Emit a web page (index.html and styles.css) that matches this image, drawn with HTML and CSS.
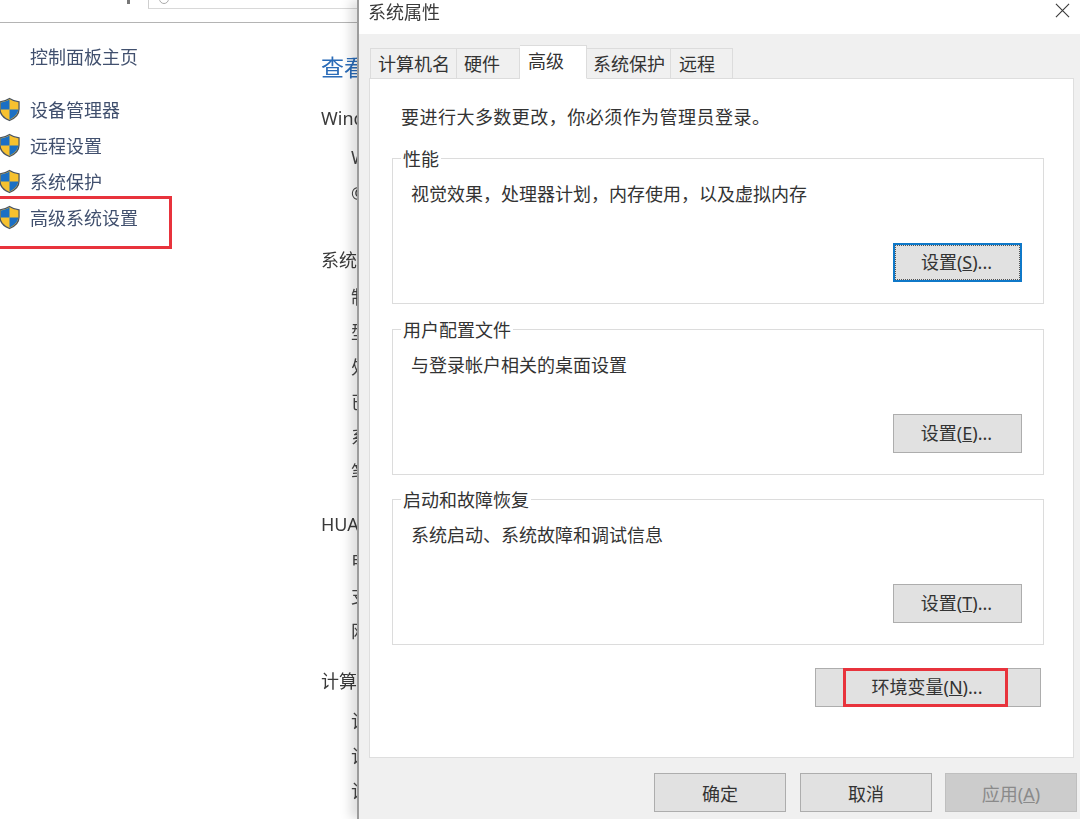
FILE: index.html
```html
<!DOCTYPE html>
<html lang="zh-CN">
<head>
<meta charset="utf-8">
<title>系统属性</title>
<link rel="stylesheet" href="styles.css">
</head>
<body>
<svg class="defs" width="0" height="0" aria-hidden="true">
  <symbol id="shield" viewBox="0 0 22 25">
    <path d="M11 1 C8 3 5 4 1 4.500 V12 C1 18 6 22 11 24 C16 22 21 18 21 12 V4.500 C17 4 14 3 11 1Z" fill="#f7c12f" stroke="#4b5460" stroke-width="1.300"/>
    <path d="M11 2 C8.500 3.500 5.500 4.600 1.800 5.200 V12.500 H11Z" fill="#1b6fc4"/>
    <path d="M11 12.500 H20.200 C19.700 17.500 15.500 21 11 23Z" fill="#1b6fc4"/>
  </symbol>
</svg>
<div class="page">
  <div class="behind">
    <div class="topbar">
      <span class="crumb"></span>
      <div class="search"><span class="lens"></span></div>
    </div>
    <div class="columns">
      <nav class="side">
        <a class="home">控制面板主页</a>
        <a class="link"><svg class="shield"><use href="#shield"/></svg>设备管理器</a>
        <a class="link"><svg class="shield"><use href="#shield"/></svg>远程设置</a>
        <a class="link"><svg class="shield"><use href="#shield"/></svg>系统保护</a>
        <a class="link link-marked"><svg class="shield"><use href="#shield"/></svg>高级系统设置<span class="mark mark-side"></span></a>
      </nav>
      <main class="info">
        <h1 class="info-title">查看</h1>
        <section class="sec sec-edition">
          <h2 class="sec-head">Wind</h2>
          <p class="edition">W</p>
          <p class="row-plain">©</p>
        </section>
        <section class="sec sec-system">
          <h2 class="sec-head">系统</h2>
          <ul class="rows">
            <li>制</li><li>型</li><li>处</li><li>已</li><li>系</li><li>笔</li>
          </ul>
        </section>
        <section class="sec sec-vendor">
          <h2 class="sec-head">HUA</h2>
          <ul class="rows">
            <li>电</li><li>支</li><li>网</li>
          </ul>
        </section>
        <section class="sec sec-vendor2">
          <h2 class="sec-head">计算</h2>
          <ul class="rows rows-last">
            <li>计</li><li>计</li><li>计</li>
          </ul>
        </section>
      </main>
    </div>
  </div>

  <div class="dialog">
    <header class="titlebar">
      <span>系统属性</span>
      <svg class="close" viewBox="0 0 16 16" aria-label="关闭"><path d="M1 1 L15 15 M15 1 L1 15" stroke="#3a3a3a" stroke-width="1.200" fill="none"/></svg>
    </header>
    <div class="dialog-body">
      <div class="tabs">
        <span class="tab tab-1">计算机名</span>
        <span class="tab tab-2">硬件</span>
        <span class="tab tab-active">高级</span>
        <span class="tab tab-4">系统保护</span>
        <span class="tab tab-5">远程</span>
      </div>
      <div class="panel">
        <p class="notice">要进行大多数更改，你必须作为管理员登录。</p>
        <div class="group">
          <div class="legend">性能</div>
          <p class="desc">视觉效果，处理器计划，内存使用，以及虚拟内存</p>
          <div class="group-foot"><button class="btn btn-focus">设置(<u>S</u>)...</button></div>
        </div>
        <div class="group">
          <div class="legend">用户配置文件</div>
          <p class="desc">与登录帐户相关的桌面设置</p>
          <div class="group-foot"><button class="btn">设置(<u>E</u>)...</button></div>
        </div>
        <div class="group group-last">
          <div class="legend">启动和故障恢复</div>
          <p class="desc">系统启动、系统故障和调试信息</p>
          <div class="group-foot"><button class="btn">设置(<u>T</u>)...</button></div>
        </div>
        <div class="env-row">
          <button class="btn btn-env">环境变量(<u>N</u>)...<span class="mark mark-env"></span></button>
        </div>
      </div>
      <div class="actions">
        <button class="btn btn-action">确定</button>
        <button class="btn btn-action">取消</button>
        <button class="btn btn-action btn-disabled">应用(<u>A</u>)</button>
      </div>
    </div>
  </div>
</div>
</body>
</html>
```

FILE: styles.css
```css
* { box-sizing: border-box; }
html, body { margin: 0; padding: 0; }
body {
  background: #fff;
  font-family: "Noto Sans", "Noto Sans CJK SC", sans-serif;
  font-size: 18px;
  color: #333;
  overflow: hidden;
}
h1, h2, p, ul { margin: 0; padding: 0; font-weight: 400; }
ul { list-style: none; }
.defs { position: absolute; }
.page { display: flex; width: 1080px; height: 819px; overflow: hidden; filter: blur(0.5px); }

.behind { width: 357px; flex: none; overflow: hidden; }
.topbar {
  display: flex;
  height: 23px;
  border-bottom: 1px solid #b4b4b4;
}
.crumb { width: 3px; height: 4px; margin: 0 0 0 127px; background: #777; }
.search {
  width: 210px;
  height: 9px;
  margin-left: 18px;
  border-left: 1px solid #cfcfcf;
  border-bottom: 1px solid #d8d8d8;
  position: relative;
  align-self: flex-start;
}
.lens {
  position: absolute;
  left: 10px;
  top: -6px;
  width: 10px;
  height: 10px;
  border: 1px solid #aaa;
  border-radius: 50%;
}
.columns { display: flex; }
.side { width: 321px; flex: none; display: flex; flex-direction: column; }
.home {
  height: 36px;
  line-height: 36px;
  margin: 16px 0 16px 30px;
  color: #41506e;
}
.link {
  position: relative;
  display: flex;
  align-items: center;
  gap: 10px;
  width: 173px;
  height: 36px;
  margin-left: -1px;
  color: #41506e;
  white-space: nowrap;
}
.shield { width: 21px; height: 25px; flex: none; }
.mark { position: absolute; border: 3px solid #e8333c; pointer-events: none; }
.mark-side { left: -6px; right: 0; top: -3px; height: 53px; }

.info { flex: none; width: 36px; white-space: nowrap; }
.info-title {
  height: 36px;
  line-height: 36px;
  margin-top: 26px;
  font-size: 23px;
  color: #2b6cb8;
}
.sec-head { height: 36px; line-height: 36px; font-size: 18px; color: #3a3a3a; }
.sec-edition { margin-top: 15px; }
.sec-system { margin-top: 31px; }
.sec-vendor { margin-top: 15.500px; }
.sec-vendor2 { margin-top: 14.500px; }
.edition, .row-plain { height: 36px; line-height: 36px; padding-left: 30px; color: #444; }
.edition { margin-top: 3px; }
.rows { padding-left: 30px; margin-top: 2px; }
.rows-last { margin-top: 4.500px; }
.rows li { height: 35px; line-height: 35px; color: #444; }

.dialog {
  position: relative;
  width: 723px;
  flex: none;
  display: flex;
  flex-direction: column;
  border-left: 2px solid #9c9c9c;
  background: #fff;
  box-shadow: -7px 0 10px rgba(0, 0, 0, 0.13);
}
.titlebar {
  height: 34px;
  flex: none;
  display: flex;
  align-items: center;
  justify-content: space-between;
  padding: 0 10px 12px 9px;
  color: #3a3a3a;
}
.close { width: 15px; height: 15px; margin-top: -1px; }
.dialog-body { flex: 1; background: #f0f0f0; padding: 0 6px 0 10px; display: flex; flex-direction: column; }
.tabs { display: flex; align-items: flex-end; height: 45px; position: relative; z-index: 1; padding-left: 1px; margin-bottom: -1px; }
.tab {
  height: 31px;
  line-height: 30px;
  background: #f0f0f0;
  border: 1px solid #dcdcdc;
  border-left-width: 0;
  white-space: nowrap;
  color: #333;
}
.tab-1 { width: 87px; padding-left: 7px; border-left-width: 1px; }
.tab-2 { width: 63px; padding-left: 7px; }
.tab-active {
  width: 67px;
  height: 34px;
  line-height: 30px;
  padding-left: 8px;
  background: #fff;
  border-bottom-color: #fff;
}
.tab-4 { width: 84px; padding-left: 6px; }
.tab-5 { width: 62px; padding-left: 8px; }

.panel {
  height: 680px;
  flex: none;
  background: #fff;
  border: 1px solid #dedede;
  padding: 25px 29px 0 22px;
  display: flex;
  flex-direction: column;
}
.notice { height: 26px; line-height: 26px; padding-left: 9px; letter-spacing: 0.47px; color: #333; white-space: nowrap; }
.group {
  height: 146px;
  flex: none;
  margin-top: 28px;
  border: 1px solid #dcdcdc;
  padding: 0 21px 21px 10px;
  display: flex;
  flex-direction: column;
}
.group + .group { margin-top: 25px; }
.group + .group-last { margin-top: 24px; }
.legend {
  width: fit-content;
  height: 26px;
  line-height: 26px;
  margin-top: -13px;
  margin-bottom: -1px;
  padding-right: 2px;
  background: #fff;
  box-shadow: -2px 0 0 #fff;
  color: #333;
}
.desc { height: 26px; line-height: 26px; margin: 10px 0 0 8px; color: #333; white-space: nowrap; }
.group-foot { margin-top: auto; display: flex; justify-content: flex-end; }
.btn {
  position: relative;
  display: block;
  height: 39px;
  width: 129px;
  padding: 0 2px 0 0;
  background: #e1e1e1;
  border: 1px solid #adadad;
  font: inherit;
  color: #333;
  white-space: nowrap;
}
.group-foot .btn { padding-bottom: 3px; }
.btn-focus {
  border: 2px solid #0f78c8;
  outline: 1px dotted #555;
  outline-offset: -3px;
}
.env-row { display: flex; justify-content: flex-end; margin: 23px 3px 0 0; }
.btn-env { width: 226px; padding-bottom: 4px; }
.mark-env { left: 27px; top: -1px; width: 165px; height: 39px; }
.actions { display: flex; justify-content: flex-end; gap: 14px; margin: 15px -3px 0 0; }
.btn-action { width: 132px; padding-right: 0; }
.btn-disabled { margin-left: -1px; background: #ccc; border-color: #bfbfbf; color: #8a8a8a; }
```
